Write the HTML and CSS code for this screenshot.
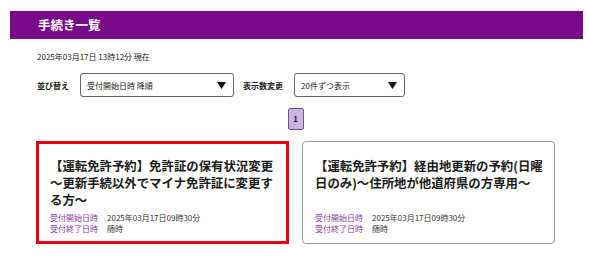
FILE: index.html
```html
<!DOCTYPE html>
<html lang="ja">
<head>
    <meta charset="UTF-8">
    <meta name="viewport" content="width=device-width, initial-scale=1.0">
    <title>手続き一覧</title>
    <link rel="stylesheet" href="styles.css">
</head>
<body>
    <div class="pagetitle">手続き一覧</div>

    <div id="main">
        <div class="now">2025年03月17日 13時12分 現在</div>

        <div class="filters">
            <span class="filterlabel">並び替え</span>
            <div class="selectbox sort">
                <span>受付開始日時 降順</span>
                <svg class="arrow" width="9" height="7" viewBox="0 0 9 7"><polygon points="0,0 9,0 4.5,7" fill="#111"/></svg>
            </div>
            <span class="filterlabel">表示数変更</span>
            <div class="selectbox count">
                <span>20件ずつ表示</span>
                <svg class="arrow" width="9" height="7" viewBox="0 0 9 7"><polygon points="0,0 9,0 4.5,7" fill="#111"/></svg>
            </div>
        </div>

        <div class="pager">
            <span class="pagebtn">1</span>
        </div>

        <div class="cards">
            <div class="card marked">
                <div class="cardtitle">【運転免許予約】免許証の保有状況変更～更新手続以外でマイナ免許証に変更する方～</div>
                <div class="meta">
                    <div><span class="metalabel">受付開始日時</span>2025年03月17日09時30分</div>
                    <div><span class="metalabel">受付終了日時</span>随時</div>
                </div>
            </div>
            <div class="card">
                <div class="cardtitle">【運転免許予約】経由地更新の予約(日曜日のみ)～住所地が他道府県の方専用～</div>
                <div class="meta">
                    <div><span class="metalabel">受付開始日時</span>2025年03月17日09時30分</div>
                    <div><span class="metalabel">受付終了日時</span>随時</div>
                </div>
            </div>
        </div>
    </div>
</body>
</html>
```

FILE: styles.css
```css
body {
    margin: 0;
    font-family: "Noto Sans CJK JP", "Noto Sans", sans-serif;
    color: #222;
    background: #fff;
}
.pagetitle {
    margin: 11px 7px 0 10px;
    height: 28px;
    line-height: 28px;
    padding-left: 28px;
    background: #780a8a;
    color: #fff;
    font-size: 12.5px;
    font-weight: bold;
}
#main {
    padding: 0 35px 0 36px;
}
.now {
    margin-top: 12px;
    font-size: 8px;
    line-height: 11px;
    padding-left: 1px;
}
.filters {
    margin-top: 11px;
    display: flex;
    align-items: center;
    height: 24px;
    font-size: 8px;
}
.filterlabel {
    font-weight: bold;
    padding-left: 1px;
    margin-right: 11px;
}
.selectbox {
    box-sizing: border-box;
    height: 24px;
    border: 1px solid #666;
    border-radius: 3px;
    display: flex;
    align-items: center;
    justify-content: space-between;
    padding: 0 7px 0 6px;
}
.sort {
    width: 154px;
    margin-right: 8px;
}
.count {
    width: 111px;
}
.pager {
    margin-top: 11px;
    display: flex;
    justify-content: center;
}
.pagebtn {
    box-sizing: border-box;
    width: 16px;
    height: 22px;
    line-height: 20px;
    text-align: center;
    font-size: 8px;
    font-weight: bold;
    background: #c9b5e0;
    border: 1px solid #6e5287;
    border-radius: 2px;
}
.cards {
    margin-top: 11px;
    display: grid;
    grid-template-columns: 1fr 1fr;
    gap: 13px;
}
.card {
    box-sizing: border-box;
    display: flex;
    flex-direction: column;
    border: 1px solid #9a9a9a;
    border-radius: 4px;
    padding: 16px 7px 9px 12px;
}
.card.marked {
    border: 3px solid #e8000f;
    border-radius: 0;
    padding: 14px 10px 7px 11px;
}
.cardtitle {
    font-size: 12.4px;
    font-weight: bold;
    line-height: 17px;
    color: #1a1a1a;
}
.meta {
    margin-top: auto;
    padding-top: 3px;
    font-size: 8px;
    line-height: 11px;
    color: #333;
}
.metalabel {
    color: #8c3a9e;
    margin-right: 9px;
}
```
